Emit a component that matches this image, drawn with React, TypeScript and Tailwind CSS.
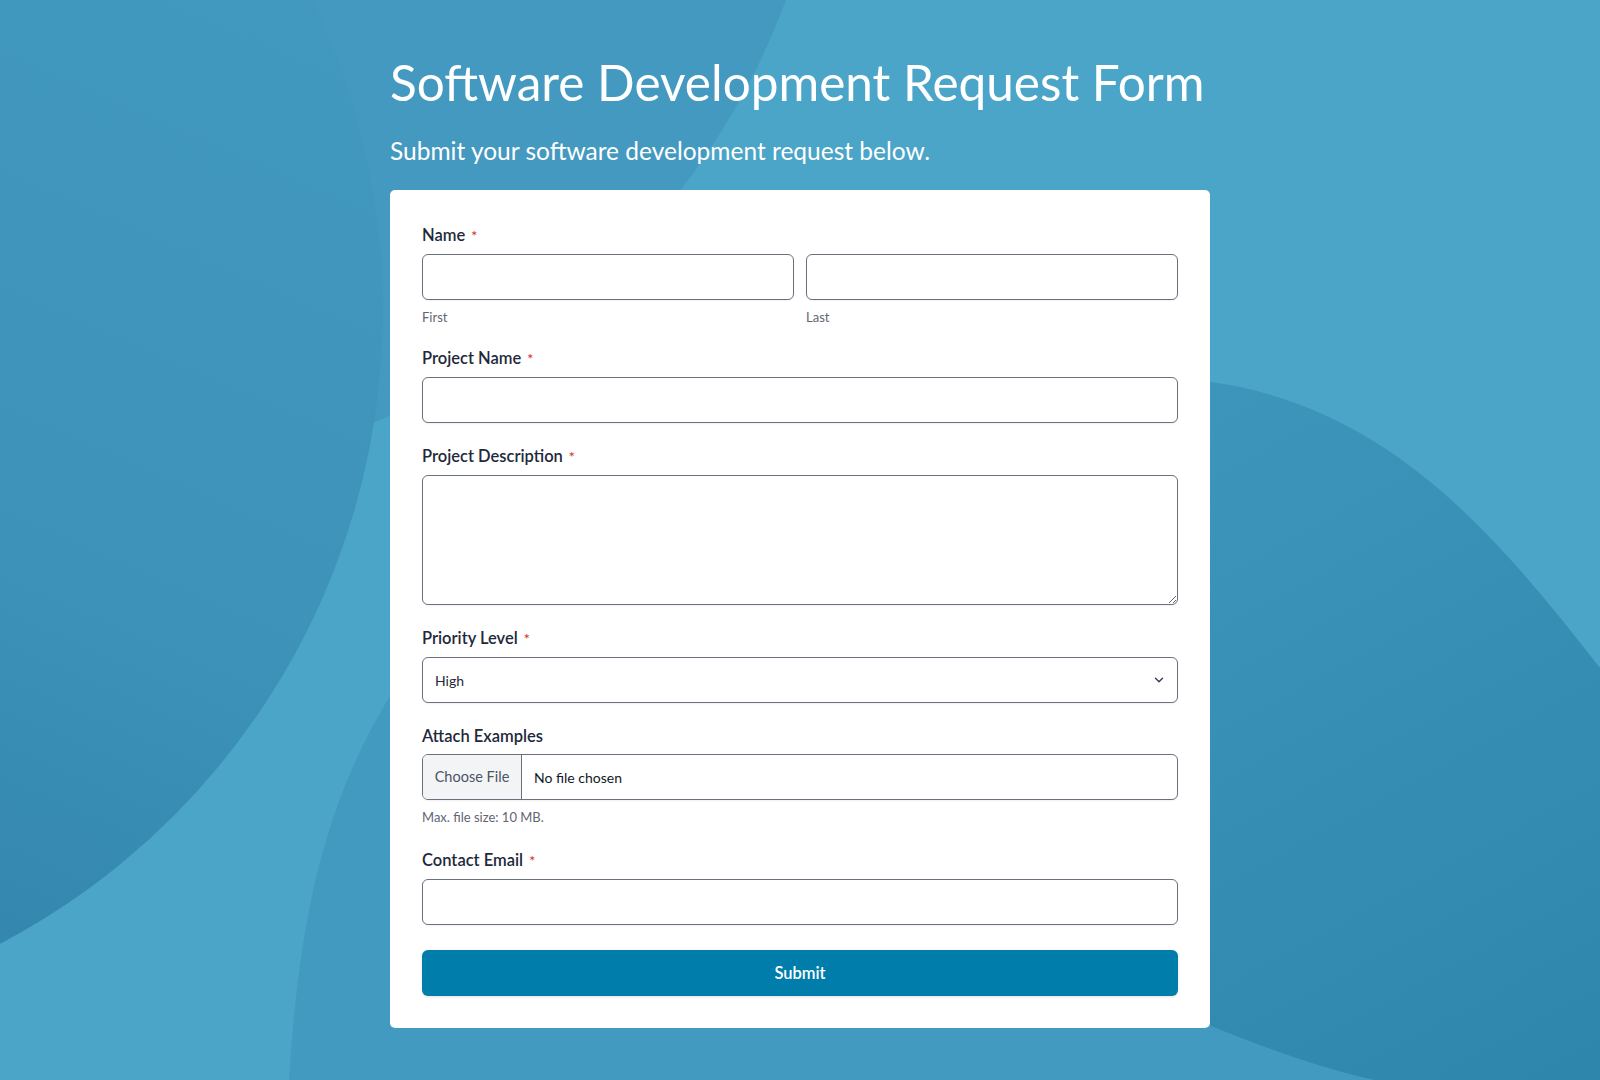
import { useState } from 'react';
import { ChevronDown } from 'lucide-react';

const font = { fontFamily: 'Lato, "Noto Sans", sans-serif' };

function Backdrop() {
  return (
    <svg
      className="absolute inset-0 h-full w-full"
      viewBox="0 0 1600 1080"
      preserveAspectRatio="xMidYMid slice"
      aria-hidden
    >
      <defs>
        <linearGradient id="gA" gradientUnits="userSpaceOnUse" x1="420" y1="0" x2="0" y2="960">
          <stop offset="0" stopColor="#4299bf" />
          <stop offset="0.6" stopColor="#3d93ba" />
          <stop offset="1" stopColor="#3387ae" />
        </linearGradient>
        <linearGradient id="gE" gradientUnits="userSpaceOnUse" x1="1230" y1="400" x2="1600" y2="1080">
          <stop offset="0" stopColor="#3e95bb" />
          <stop offset="1" stopColor="#2f86ad" />
        </linearGradient>
      </defs>
      <rect width="1600" height="1080" fill="#4ba5c8" />
      <path
        d="M289,1080 C300,900 330,790 398,683 C600,420 900,330 1235,386 C1400,420 1500,540 1600,668 L1600,1080 Z"
        fill="#439ac0"
      />
      <path
        d="M1150,372 L1235,386 C1400,420 1500,540 1600,668 L1600,1080 L1374,1080 Q1290,1062 1150,1000 Z"
        fill="url(#gE)"
      />
      <circle cx="102" cy="-255" r="730" fill="#4499c0" />
      <circle cx="-333" cy="310" r="716" fill="url(#gA)" />
    </svg>
  );
}

function Label({ children, required }: { children: React.ReactNode; required?: boolean }) {
  return (
    <label className="mb-[5px] block text-[16.5px] leading-[26px] font-semibold text-[#1e293b]">
      {children}
      {required && <span className="ml-[6px] text-[14px] text-[#d63b2f]">*</span>}
    </label>
  );
}

const inputCls =
  'block w-full h-[46px] rounded-md border border-[#6b717c] bg-white px-3 text-[14px] text-[#1f2937] shadow-[0_1px_2px_rgba(0,0,0,0.06)] outline-none focus:border-[#007dab]';

const hintCls = 'mt-[9px] text-[13px] leading-4 text-[#5f6673]';

export default function App() {
  const [priority, setPriority] = useState('High');

  return (
    <div className="relative min-h-screen overflow-hidden" style={font}>
      <Backdrop />
      <div className="relative mx-auto w-[820px] pt-[53px] pb-12">
        <h1 className="text-[49.5px] leading-[58px] font-normal text-white">Software Development Request Form</h1>
        <p className="mt-6 text-[24.5px] leading-8 text-white">Submit your software development request below.</p>

        <form className="mt-[23px] rounded-[5px] bg-white p-8" onSubmit={(e) => e.preventDefault()}>
          <div className="flex flex-col gap-5">
            <div>
              <Label required>Name</Label>
              <div className="grid grid-cols-2 gap-3">
                <div>
                  <input type="text" className={inputCls} />
                  <p className={hintCls}>First</p>
                </div>
                <div>
                  <input type="text" className={inputCls} />
                  <p className={hintCls}>Last</p>
                </div>
              </div>
            </div>

            <div>
              <Label required>Project Name</Label>
              <input type="text" className={inputCls} />
            </div>

            <div>
              <Label required>Project Description</Label>
              <textarea className="block h-[130px] w-full rounded-md border border-[#6b717c] bg-white px-3 py-2 text-[14px] text-[#1f2937] shadow-[0_1px_2px_rgba(0,0,0,0.06)] outline-none" />
            </div>

            <div>
              <Label required>Priority Level</Label>
              <div className="relative">
                <select
                  value={priority}
                  onChange={(e) => setPriority(e.target.value)}
                  className={`${inputCls} appearance-none pr-10`}
                  style={font}
                >
                  <option>High</option>
                  <option>Medium</option>
                  <option>Low</option>
                </select>
                <ChevronDown className="pointer-events-none absolute right-[12px] top-[16px] h-[14px] w-[14px] text-[#374151]" strokeWidth={2.5} />
              </div>
            </div>

            <div>
              <Label>Attach Examples</Label>
              <label className="flex h-[46px] w-full cursor-pointer overflow-hidden rounded-md border border-[#6b717c] bg-white shadow-[0_1px_2px_rgba(0,0,0,0.06)]">
                <input type="file" className="sr-only" />
                <span className="flex w-[99px] items-center justify-center border-r border-[#6b717c] bg-[#f3f4f6] text-[14.5px] text-[#4b5563]">
                  Choose File
                </span>
                <span className="flex items-center pl-3 text-[14px] text-[#111827]">No file chosen</span>
              </label>
              <p className="mt-[7px] text-[13px] leading-5 text-[#5f6673]">Max. file size: 10 MB.</p>
            </div>

            <div>
              <Label required>Contact Email</Label>
              <input type="email" className={inputCls} />
            </div>
          </div>

          <button
            type="submit"
            className="mt-[25px] flex h-[46px] w-full items-center justify-center rounded-md bg-[#007dab] text-[16.5px] font-semibold text-white shadow-[0_1px_3px_rgba(0,0,0,0.12)] hover:bg-[#006d96]"
          >
            Submit
          </button>
        </form>
      </div>
    </div>
  );
}
